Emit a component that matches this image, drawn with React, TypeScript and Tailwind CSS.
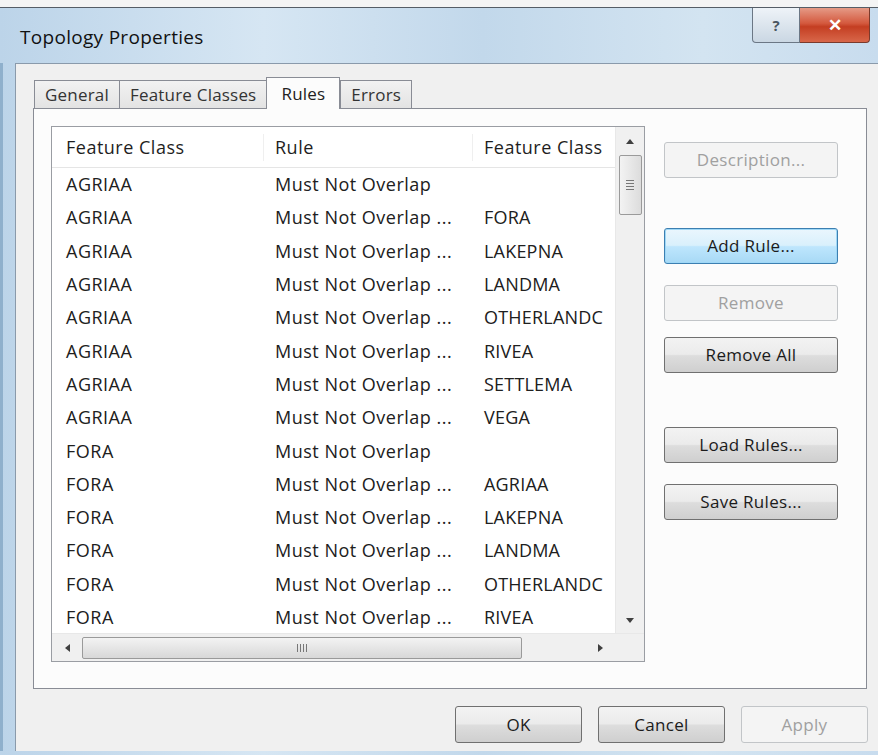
import React from "react";

type Row = { fc: string; rule: string; other: string };

const rows: Row[] = [
  { fc: "AGRIAA", rule: "Must Not Overlap", other: "" },
  { fc: "AGRIAA", rule: "Must Not Overlap ...", other: "FORA" },
  { fc: "AGRIAA", rule: "Must Not Overlap ...", other: "LAKEPNA" },
  { fc: "AGRIAA", rule: "Must Not Overlap ...", other: "LANDMA" },
  { fc: "AGRIAA", rule: "Must Not Overlap ...", other: "OTHERLANDC" },
  { fc: "AGRIAA", rule: "Must Not Overlap ...", other: "RIVEA" },
  { fc: "AGRIAA", rule: "Must Not Overlap ...", other: "SETTLEMA" },
  { fc: "AGRIAA", rule: "Must Not Overlap ...", other: "VEGA" },
  { fc: "FORA", rule: "Must Not Overlap", other: "" },
  { fc: "FORA", rule: "Must Not Overlap ...", other: "AGRIAA" },
  { fc: "FORA", rule: "Must Not Overlap ...", other: "LAKEPNA" },
  { fc: "FORA", rule: "Must Not Overlap ...", other: "LANDMA" },
  { fc: "FORA", rule: "Must Not Overlap ...", other: "OTHERLANDC" },
  { fc: "FORA", rule: "Must Not Overlap ...", other: "RIVEA" },
];

type BtnProps = {
  label: string;
  disabled?: boolean;
  focused?: boolean;
  className?: string;
};

// Aero-style push button
function Btn({ label, disabled, focused, className = "" }: BtnProps) {
  let look =
    "border-[#707070] bg-[linear-gradient(#f3f3f3_0%,#ebebeb_48%,#dddddd_52%,#cfcfcf_100%)] text-[#1b1b1b]";
  if (disabled) look = "border-[#c2c5c8] bg-[#f4f4f4] text-[#a0a0a0]";
  if (focused)
    look =
      "border-[#3c7fb1] bg-[linear-gradient(#eaf6fd_0%,#d9f0fc_48%,#bee6fd_52%,#a7d9f5_100%)] text-[#1b1b1b] shadow-[inset_0_0_0_1px_#9fd8f7]";
  return (
    <div
      className={`flex items-center justify-center whitespace-nowrap rounded-[3px] border text-[17px] tracking-[0.3px] ${look} ${className}`}
    >
      {label}
    </div>
  );
}

function Tab({ label, active }: { label: string; active?: boolean }) {
  if (active) {
    return (
      <div className="relative z-10 -mb-px flex h-[32px] items-center border border-b-0 border-[#898c95] bg-[#fcfcfc] px-[14px] text-[17px] tracking-[0.2px] text-[#222]">
        {label}
      </div>
    );
  }
  return (
    <div className="-mr-px mt-[3px] flex h-[28px] items-center border border-b-0 border-[#898c95] bg-[linear-gradient(#f2f2f2,#e3e3e3)] px-[10px] text-[17px] tracking-[0.2px] text-[#333]">
      {label}
    </div>
  );
}

function Arrow({ dir }: { dir: "up" | "down" | "left" | "right" }) {
  const pts = {
    up: "0,5 4,0 8,5",
    down: "0,0 4,5 8,0",
    left: "5,0 0,4 5,8",
    right: "0,0 5,4 0,8",
  }[dir];
  const vert = dir === "up" || dir === "down";
  return (
    <svg width={vert ? 8 : 5} height={vert ? 5 : 8} viewBox={vert ? "0 0 8 5" : "0 0 5 8"}>
      <polygon points={pts} fill="#404040" />
    </svg>
  );
}

function RulesList() {
  return (
    <div className="flex h-[536px] w-[594px] shrink-0 flex-col border border-[#9a9da3] bg-white">
      <div className="flex min-h-0 flex-1">
        <div className="min-w-0 flex-1 overflow-hidden">
          <div className="flex h-[41px] items-center whitespace-nowrap border-b border-[#e5e5e5] text-[18px] tracking-[0.5px] text-[#1e1e1e]">
            <div className="w-[212px] shrink-0 border-r border-[#efefef] pl-[14px]">Feature Class</div>
            <div className="w-[209px] shrink-0 border-r border-[#efefef] pl-[11px]">Rule</div>
            <div className="shrink-0 pl-[11px]">Feature Class</div>
          </div>
          {rows.map((r, i) => (
            <div
              key={i}
              className="flex h-[33.3px] items-center whitespace-nowrap text-[18px] tracking-[0.5px] text-[#202020]"
            >
              <div className="w-[212px] shrink-0 pl-[14px]">{r.fc}</div>
              <div className="w-[209px] shrink-0 pl-[11px]">{r.rule}</div>
              <div className="shrink-0 pl-[11px] tracking-[0.2px]">{r.other}</div>
            </div>
          ))}
        </div>
        {/* vertical scrollbar */}
        <div className="flex w-[29px] shrink-0 flex-col items-center border-l border-[#e8e8e8] bg-[#f0f0f0]">
          <div className="flex h-[28px] items-center justify-center">
            <Arrow dir="up" />
          </div>
          <div className="flex h-[60px] w-[23px] flex-col items-center justify-center gap-[2px] rounded-[2px] border border-[#9a9a9a] bg-[linear-gradient(90deg,#f3f3f3,#dcdcdc)]">
            <div className="h-px w-[8px] bg-[#777]" />
            <div className="h-px w-[8px] bg-[#777]" />
            <div className="h-px w-[8px] bg-[#777]" />
            <div className="h-px w-[8px] bg-[#777]" />
          </div>
          <div className="flex-1" />
          <div className="flex h-[26px] items-center justify-center">
            <Arrow dir="down" />
          </div>
        </div>
      </div>
      {/* horizontal scrollbar */}
      <div className="flex h-[28px] items-center border-t border-[#e8e8e8] bg-[#f0f0f0]">
        <div className="flex w-[30px] items-center justify-center">
          <Arrow dir="left" />
        </div>
        <div className="flex h-[22px] w-[440px] items-center justify-center gap-[2px] rounded-[2px] border border-[#9a9a9a] bg-[linear-gradient(#f3f3f3,#d8d8d8)]">
          <div className="h-[8px] w-px bg-[#777]" />
          <div className="h-[8px] w-px bg-[#777]" />
          <div className="h-[8px] w-px bg-[#777]" />
          <div className="h-[8px] w-px bg-[#777]" />
        </div>
        <div className="flex-1" />
        <div className="flex w-[30px] items-center justify-center">
          <Arrow dir="right" />
        </div>
        <div className="h-full w-[29px] bg-[#f0f0f0]" />
      </div>
    </div>
  );
}

export default function App() {
  return (
    <div
      className="flex h-[755px] w-[878px] flex-col overflow-hidden bg-[#f3f3f3]"
      style={{ fontFamily: '"Open Sans", "Noto Sans", "Liberation Sans", sans-serif' }}
    >
      <div className="h-[7px] bg-[#f4f4f4]" />
      <div className="flex flex-1 flex-col border-t border-[#555d66] bg-[linear-gradient(90deg,#bcd4e9_0%,#d6e6f3_30%,#c2d8eb_55%,#d3e4f1_80%,#c8dcee_100%)]">
        {/* caption */}
        <div className="flex h-[55px] items-start">
          <div className="pl-[20px] pt-[15px] text-[19px] tracking-[0.3px] text-[#111]">Topology Properties</div>
          <div className="flex-1" />
          <div className="flex h-[35px] w-[48px] items-center justify-center rounded-bl-[4px] border border-t-0 border-[#6b7785] bg-[linear-gradient(#eef3f8,#cad7e3)] text-[15px] font-bold text-[#4a5560]">
            ?
          </div>
          <div className="mr-[8px] flex h-[35px] w-[70px] items-center justify-center rounded-br-[4px] border border-l-0 border-t-0 border-[#7a3a2c] bg-[linear-gradient(#e59a86_0%,#d4593e_45%,#c43e22_55%,#d8674a_100%)] text-[17px] font-bold text-white">
            ✕
          </div>
        </div>
        <div className="flex flex-1">
          <div className="w-[15px] border-l-[3px] border-[#8fb0cc]" />
          {/* client area */}
          <div className="flex flex-1 flex-col border-l border-t border-[#8a9aab] bg-[#f0f0f0] pl-[17px] pr-[10px] pt-[13px]">
            <div className="flex items-end pl-px">
              <Tab label="General" />
              <Tab label="Feature Classes" />
              <Tab label="Rules" active />
              <Tab label="Errors" />
            </div>
            <div className="flex h-[581px] w-[834px] gap-[19px] border border-[#898c95] bg-[#fcfcfc] pl-[17px] pt-[17px]">
              <RulesList />
              <div className="flex w-[174px] shrink-0 flex-col pt-[16px]">
                <Btn label="Description..." disabled className="h-[36px]" />
                <Btn label="Add Rule..." focused className="mt-[50px] h-[36px]" />
                <Btn label="Remove" disabled className="mt-[21px] h-[36px]" />
                <Btn label="Remove All" className="mt-[16px] h-[36px]" />
                <Btn label="Load Rules..." className="mt-[54px] h-[36px]" />
                <Btn label="Save Rules..." className="mt-[21px] h-[36px]" />
              </div>
            </div>
            <div className="flex justify-end gap-[16px] pt-[17px]">
              <Btn label="OK" className="h-[37px] w-[127px]" />
              <Btn label="Cancel" className="h-[37px] w-[127px]" />
              <Btn label="Apply" disabled className="h-[37px] w-[127px]" />
            </div>
          </div>
        </div>
        <div className="h-[4px]" />
      </div>
    </div>
  );
}
